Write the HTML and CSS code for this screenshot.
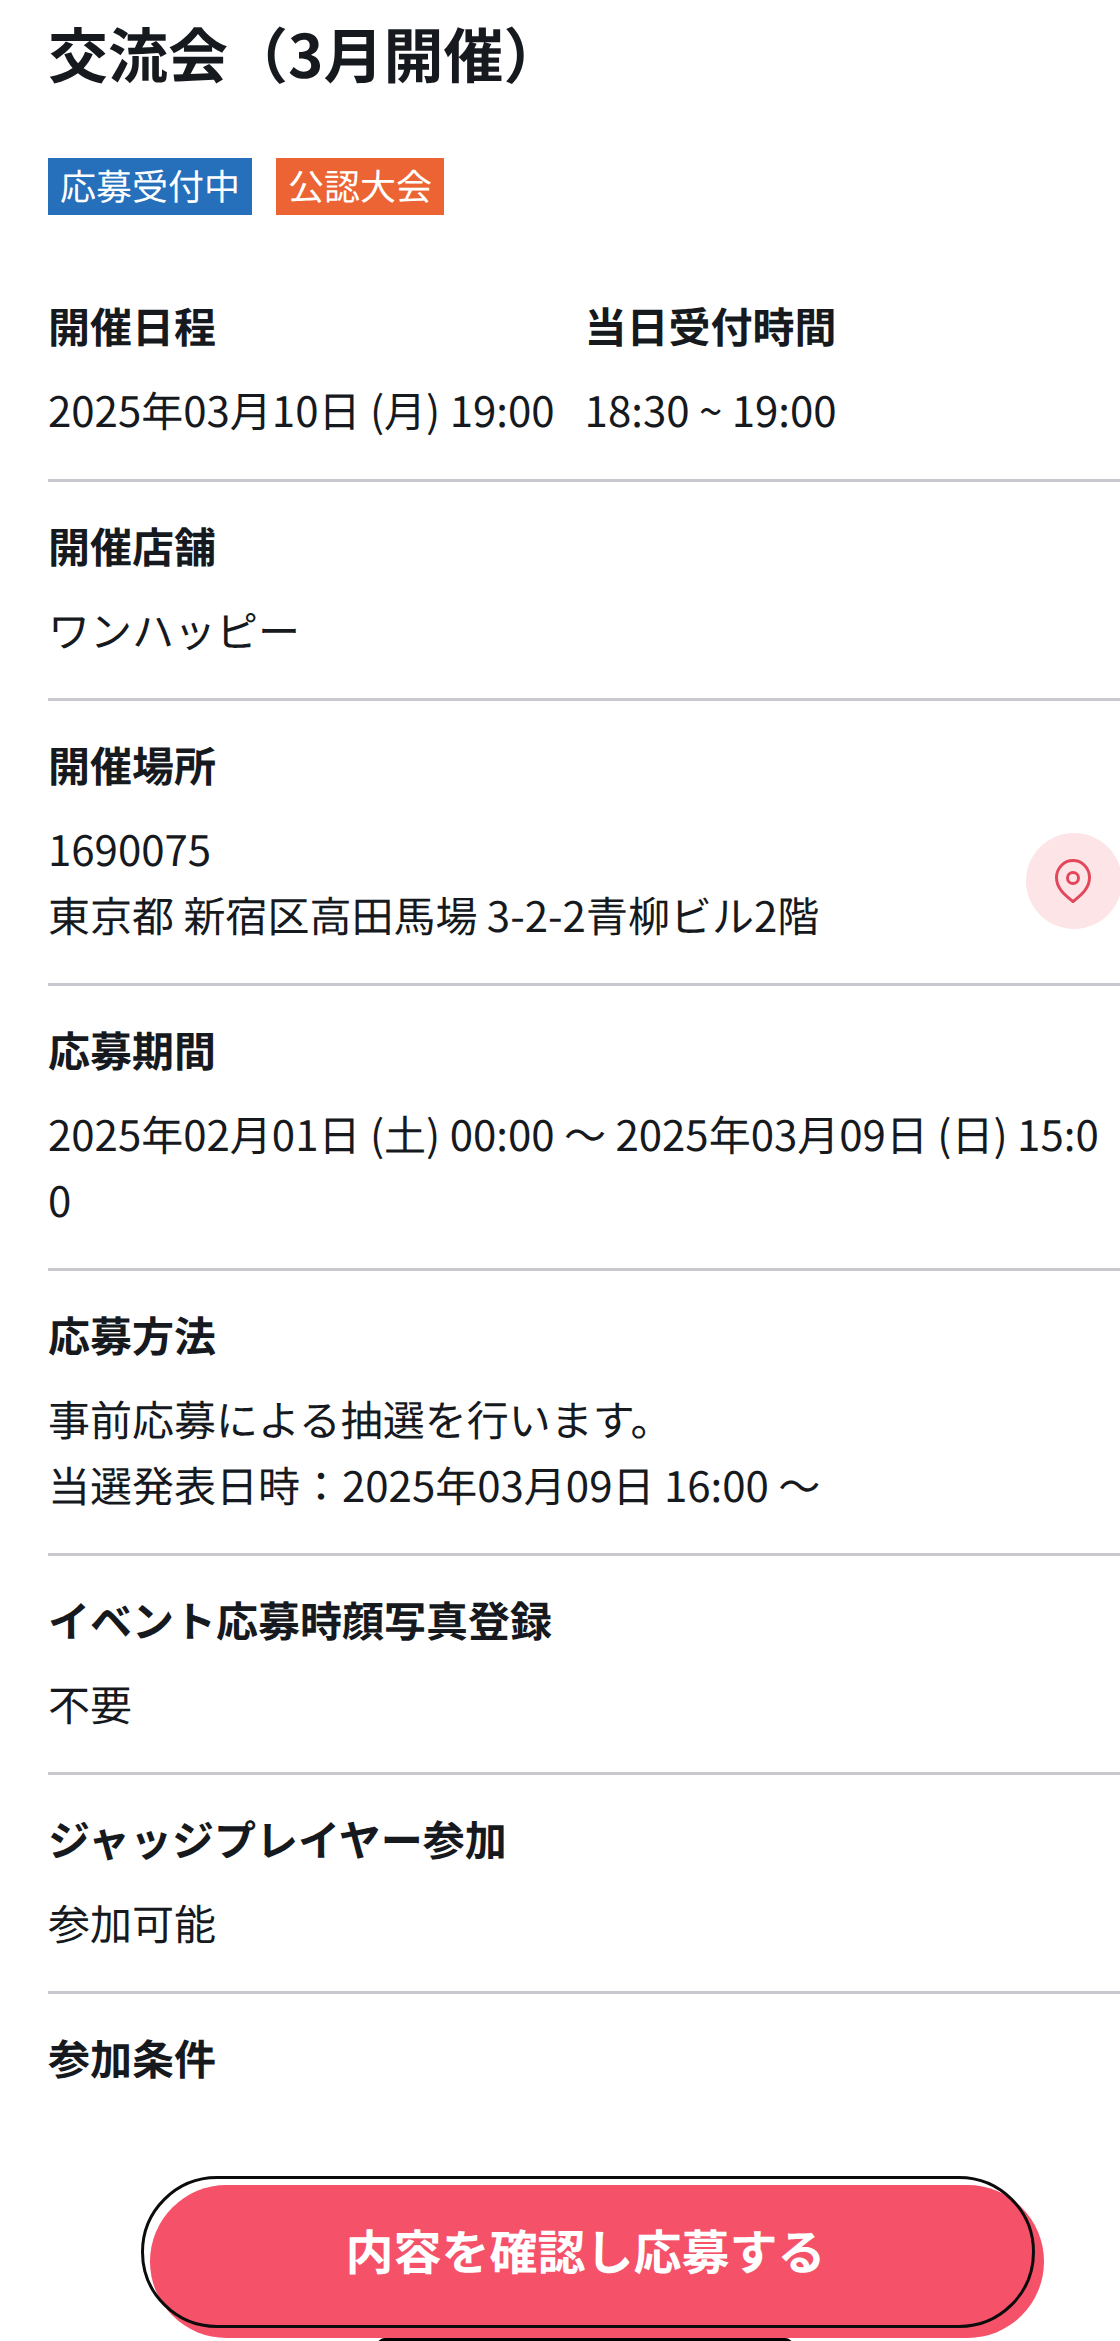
FILE: index.html
```html
<!DOCTYPE html>
<html lang="ja">
<head>
<meta charset="utf-8">
<title>交流会（3月開催）</title>
<link rel="stylesheet" href="styles.css">
</head>
<body>
<main class="page">
  <h1 class="title">交流会（3月開催）</h1>
  <div class="tags">
    <span class="tag tag-blue">応募受付中</span>
    <span class="tag tag-orange">公認大会</span>
  </div>
  <section class="row row-split">
    <div class="col-date">
      <h2 class="label">開催日程</h2>
      <p class="value">2025年03月10日 (月) 19:00</p>
    </div>
    <div>
      <h2 class="label">当日受付時間</h2>
      <p class="value">18:30 ~ 19:00</p>
    </div>
  </section>
  <section class="row">
    <h2 class="label">開催店舗</h2>
    <p class="value">ワンハッピー</p>
  </section>
  <section class="row row-map">
    <h2 class="label">開催場所</h2>
    <p class="value">1690075<br>東京都 新宿区高田馬場 3-2-2青柳ビル2階</p>
    <a class="map-btn" href="#" aria-label="地図">
      <svg class="pin" viewBox="0 0 36 44" width="36" height="44" fill="none" stroke="#e2475c" stroke-width="3">
        <path d="M18 42.5C12 37.5 1.5 30.5 1.5 18.5C1.5 9 9 1.5 18 1.5S34.5 9 34.5 18.5C34.5 30.5 24 37.5 18 42.5Z" stroke-linejoin="round"/>
        <circle cx="18" cy="19" r="5.5"/>
      </svg>
    </a>
  </section>
  <section class="row">
    <h2 class="label">応募期間</h2>
    <p class="value">2025年02月01日 (土) 00:00 〜 2025年03月09日 (日) 15:00</p>
  </section>
  <section class="row">
    <h2 class="label">応募方法</h2>
    <p class="value">事前応募による抽選を行います。<br>当選発表日時：2025年03月09日 16:00 〜</p>
  </section>
  <section class="row">
    <h2 class="label">イベント応募時顔写真登録</h2>
    <p class="value">不要</p>
  </section>
  <section class="row">
    <h2 class="label">ジャッジプレイヤー参加</h2>
    <p class="value">参加可能</p>
  </section>
  <section class="row row-last">
    <h2 class="label">参加条件</h2>
  </section>
</main>
<div class="cta">
  <span class="cta-shadow"></span>
  <a class="cta-btn" href="#">内容を確認し応募する</a>
</div>
<div class="home-bar"></div>
</body>
</html>
```
FILE: styles.css
```css
html, body {
  margin: 0;
  padding: 0;
  background: #fff;
}
body {
  height: 2341px;
  overflow: hidden;
  position: relative;
  font-family: "Noto Sans CJK JP", "Noto Sans", sans-serif;
  color: #16191d;
  text-rendering: geometricPrecision;
}
.page {
  padding-left: 48px;
}
.title {
  margin: 0;
  padding-top: 10px;
  font-size: 60px;
  line-height: 86px;
  font-weight: 700;
}
.tags {
  display: flex;
  gap: 24px;
  margin-top: 62px;
  margin-bottom: 47px;
}
.tag {
  display: block;
  height: 57px;
  padding: 0 12px;
  font-size: 36px;
  line-height: 54px;
  color: #fff;
}
.tag-blue { background: #266fbb; }
.tag-orange { background: #ec6433; }
.row {
  position: relative;
  padding: 31px 16px 35px 0;
  border-bottom: 3px solid #c9c8ce;
}
.row-split {
  display: flex;
  gap: 30px;
  padding-bottom: 36px;
}
.row-last { border-bottom: 0; }
.label {
  margin: 0 0 18px;
  font-size: 42px;
  line-height: 66px;
  font-weight: 700;
}
.value {
  margin: 0;
  font-size: 42px;
  line-height: 66px;
  font-weight: 400;
  word-break: break-all;
}
.map-btn {
  position: absolute;
  top: 132px;
  right: -2px;
  width: 96px;
  height: 96px;
  border-radius: 50%;
  background: #fde4e6;
  display: flex;
  align-items: center;
  justify-content: center;
}
.pin {
  margin-right: 2px;
}
.cta {
  position: absolute;
  left: 141px;
  top: 2176px;
  width: 894px;
  height: 152px;
}
.cta-shadow {
  position: absolute;
  left: 9px;
  top: 9px;
  width: 894px;
  height: 153px;
  border-radius: 77px;
  background: #f55168;
}
.cta-btn {
  position: absolute;
  inset: 0;
  box-sizing: border-box;
  border: 3px solid #0c0c0c;
  border-radius: 76px;
  padding: 0 5px 6px 0;
  display: flex;
  align-items: center;
  justify-content: center;
  color: #fff;
  font-size: 48px;
  font-weight: 700;
  text-decoration: none;
}
.home-bar {
  position: absolute;
  left: 377px;
  top: 2338px;
  width: 416px;
  height: 8px;
  border-radius: 8px 8px 0 0;
  background: #000;
}
```
